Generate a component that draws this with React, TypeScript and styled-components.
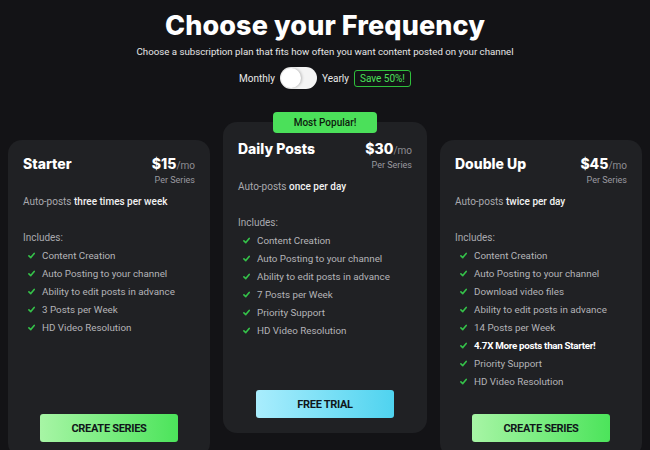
import React from "react";
import styled, { createGlobalStyle } from "styled-components";

const Global = createGlobalStyle`
  html, body { margin: 0; padding: 0; background: #131316; }
  body { font-family: Roboto, "Liberation Sans", sans-serif; color: #fff; overflow: hidden; }
  * { box-sizing: border-box; }
`;

const Page = styled.div`
  width: 650px;
  height: 450px;
  overflow: hidden;
  background: #131316;
  display: flex;
  flex-direction: column;
  align-items: center;
  padding-top: 10px;
`;

const Title = styled.h1`
  margin: 0;
  font-family: Inter, "Open Sans", sans-serif;
  font-weight: 800;
  font-size: 27px;
  line-height: 32px;
  letter-spacing: 0.1px;
  color: #fff;
`;

const Subtitle = styled.p`
  margin: 4px 0 0;
  font-size: 9.7px;
  line-height: 12px;
  color: #e6e6e6;
`;

const ToggleRow = styled.div`
  margin-top: 9px;
  display: flex;
  align-items: center;
  gap: 5px;
  font-size: 10px;
  color: #e8e8e8;
`;

const Switch = styled.div`
  width: 37px;
  height: 22px;
  border-radius: 11px;
  background: #f4f4f4;
  display: flex;
  align-items: center;
  padding: 0 1px;
`;

const Knob = styled.div`
  width: 20px;
  height: 20px;
  border-radius: 50%;
  background: #fff;
  box-shadow: 1px 0 3px rgba(0, 0, 0, 0.25);
`;

const SaveBadge = styled.span`
  border: 1px solid #2fbf3c;
  border-radius: 3px;
  color: #4be05a;
  font-size: 10px;
  line-height: 15px;
  padding: 0 5px;
`;

const Cards = styled.div`
  margin-top: 33px;
  width: 650px;
  padding: 0 8px;
  display: grid;
  grid-template-columns: 202px 204px 202px;
  column-gap: 13px;
  align-items: start;
`;

const Card = styled.div<{ $featured?: boolean }>`
  position: relative;
  margin-top: ${(p) => (p.$featured ? "0" : "18px")};
  height: ${(p) => (p.$featured ? "311px" : "317px")};
  background: #202124;
  border-radius: 14px;
  padding: ${(p) => (p.$featured ? "18px" : "15px")} 15px 15px;
  display: flex;
  flex-direction: column;
`;

const PopularBadge = styled.div`
  position: absolute;
  top: -10px;
  left: 50%;
  transform: translateX(-50%);
  width: 104px;
  height: 21px;
  border-radius: 4px;
  background: #4be05a;
  color: #0d1a0d;
  font-size: 10px;
  font-weight: 500;
  display: flex;
  align-items: center;
  justify-content: center;
`;

const Header = styled.div`
  display: flex;
  justify-content: space-between;
  align-items: flex-start;
`;

const PlanName = styled.div`
  font-family: Inter, "Open Sans", sans-serif;
  font-weight: 800;
  font-size: 14px;
  line-height: 18px;
  color: #fff;
`;

const PriceBlock = styled.div`
  display: flex;
  flex-direction: column;
  align-items: flex-end;
`;

const Price = styled.div`
  font-family: Inter, "Open Sans", sans-serif;
  font-weight: 800;
  font-size: 14px;
  line-height: 18px;
  color: #fff;
`;

const Per = styled.span`
  font-family: Roboto, sans-serif;
  font-weight: 400;
  font-size: 10px;
  color: #8d8d92;
`;

const PerSeries = styled.div`
  font-size: 9px;
  line-height: 11px;
  color: #9a9aa0;
`;

const Desc = styled.div`
  margin-top: 9px;
  font-size: 10px;
  line-height: 14px;
  color: #a9a9ae;
  & b { color: #f2f2f2; font-weight: 500; }
`;

const Includes = styled.div`
  margin-top: 22px;
  font-size: 10px;
  line-height: 14px;
  color: #a9a9ae;
`;

const List = styled.ul`
  list-style: none;
  margin: 1px 0 0;
  padding: 0 0 0 5px;
  display: flex;
  flex-direction: column;
`;

const Item = styled.li<{ $strong?: boolean }>`
  display: flex;
  align-items: center;
  gap: 7px;
  height: 18px;
  font-size: 9.8px;
  color: ${(p) => (p.$strong ? "#fff" : "#b4b4b8")};
  font-weight: ${(p) => (p.$strong ? 700 : 400)};
  letter-spacing: ${(p) => (p.$strong ? "-0.3px" : "0")};
`;

const Button = styled.button<{ $variant: "green" | "cyan" }>`
  margin-top: auto;
  align-self: center;
  width: 138px;
  height: 28px;
  border: none;
  border-radius: 3px;
  font-family: Roboto, sans-serif;
  font-weight: 700;
  font-size: 11px;
  letter-spacing: -0.3px;
  color: #10161a;
  background: ${(p) =>
    p.$variant === "green"
      ? "linear-gradient(90deg, #a7f5a5 0%, #4ce45b 100%)"
      : "linear-gradient(90deg, #a9edfd 0%, #4fd3ef 100%)"};
`;

const Check = () => (
  <svg width="7" height="7" viewBox="0 0 7 7" style={{ flexShrink: 0 }}>
    <path d="M0.9 3.8 L2.8 5.6 L6.2 1.4" fill="none" stroke="#35c44a" strokeWidth="1.6" strokeLinecap="round" strokeLinejoin="round" />
  </svg>
);

type Plan = {
  name: string;
  price: string;
  freq: string;
  items: { text: string; strong?: boolean }[];
  featured?: boolean;
  cta: string;
};

const plans: Plan[] = [
  {
    name: "Starter",
    price: "$15",
    freq: "three times per week",
    items: [
      { text: "Content Creation" },
      { text: "Auto Posting to your channel" },
      { text: "Ability to edit posts in advance" },
      { text: "3 Posts per Week" },
      { text: "HD Video Resolution" },
    ],
    cta: "CREATE SERIES",
  },
  {
    name: "Daily Posts",
    price: "$30",
    freq: "once per day",
    featured: true,
    items: [
      { text: "Content Creation" },
      { text: "Auto Posting to your channel" },
      { text: "Ability to edit posts in advance" },
      { text: "7 Posts per Week" },
      { text: "Priority Support" },
      { text: "HD Video Resolution" },
    ],
    cta: "FREE TRIAL",
  },
  {
    name: "Double Up",
    price: "$45",
    freq: "twice per day",
    items: [
      { text: "Content Creation" },
      { text: "Auto Posting to your channel" },
      { text: "Download video files" },
      { text: "Ability to edit posts in advance" },
      { text: "14 Posts per Week" },
      { text: "4.7X More posts than Starter!", strong: true },
      { text: "Priority Support" },
      { text: "HD Video Resolution" },
    ],
    cta: "CREATE SERIES",
  },
];

export default function App() {
  return (
    <Page>
      <Global />
      <Title>Choose your Frequency</Title>
      <Subtitle>Choose a subscription plan that fits how often you want content posted on your channel</Subtitle>
      <ToggleRow>
        <span>Monthly</span>
        <Switch>
          <Knob />
        </Switch>
        <span>Yearly</span>
        <SaveBadge>Save 50%!</SaveBadge>
      </ToggleRow>
      <Cards>
        {plans.map((p) => (
          <Card key={p.name} $featured={p.featured}>
            {p.featured && <PopularBadge>Most Popular!</PopularBadge>}
            <Header>
              <PlanName>{p.name}</PlanName>
              <PriceBlock>
                <Price>
                  {p.price}
                  <Per>/mo</Per>
                </Price>
                <PerSeries>Per Series</PerSeries>
              </PriceBlock>
            </Header>
            <Desc>
              Auto-posts <b>{p.freq}</b>
            </Desc>
            <Includes>Includes:</Includes>
            <List>
              {p.items.map((it) => (
                <Item key={it.text} $strong={it.strong}>
                  <Check />
                  {it.text}
                </Item>
              ))}
            </List>
            <Button $variant={p.featured ? "cyan" : "green"}>{p.cta}</Button>
          </Card>
        ))}
      </Cards>
    </Page>
  );
}
